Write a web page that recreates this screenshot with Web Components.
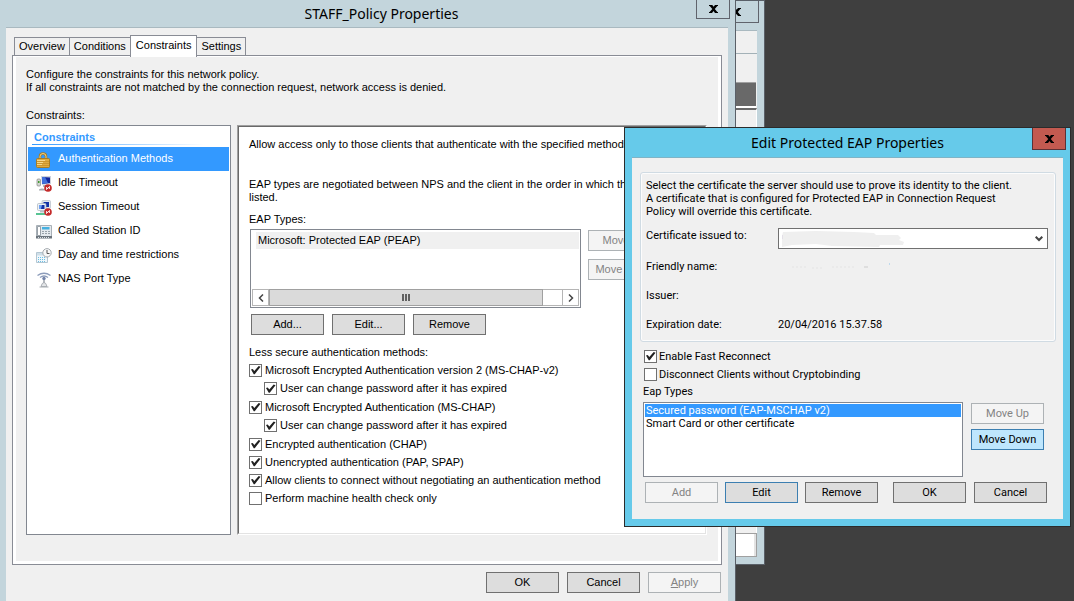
<!DOCTYPE html>
<html lang="en">
<head>
<meta charset="utf-8">
<title>Network Policy Server</title>
<style>
html, body { height: 100%; margin: 0; }
body { background: #3f3f3f; color: #000; font: 11px/13px "Liberation Sans", Arial, sans-serif; overflow: hidden; }
</style>
</head>
<body>
<nps-desktop></nps-desktop>
<script>
const define = (name, html, init) => {
  const template = document.createElement('template');
  template.innerHTML = html;
  customElements.define(name, class extends HTMLElement {
    constructor() {
      super();
      this.attachShadow({ mode: 'open' }).append(template.content.cloneNode(true));
    }
    connectedCallback() {
      if (init && !this.ready) { this.ready = true; init(this, this.shadowRoot); }
    }
  });
};

/* Window frame: title bar, close button, client area */
define('win-frame', `
<style>
:host { display: flex; flex-direction: column; box-sizing: border-box; position: relative; background: #c3d5dc; border: 0 solid #5a6068; border-right-width: 1px; padding: 0 7px 0 6px; }
:host([tone="active"]) { background: #66caea; border: 1px solid #2b2b2b; padding: 0 7px 7px; }
:host([tone="back"]) { border-width: 1px; padding: 0 7px 7px 6px; }
header { height: 27px; padding-left: 29px; display: flex; align-items: center; justify-content: center; }
:host([tone="active"]) header { height: 29px; padding: 0; }
:host([tone="back"]) header { height: 29px; }
h1 { margin: 0; font: 14px/20px "Noto Sans", "Open Sans", sans-serif; white-space: nowrap; }
button { position: absolute; top: 0; right: 5px; width: 34px; height: 19px; box-sizing: border-box; padding: 0; border: 1px solid #60636c; border-top: 0; background: none; display: flex; align-items: center; justify-content: center; }
:host([tone="active"]) button { right: 4px; height: 22px; background: #c35a50; border-color: #5c3236; }
:host([tone="back"]) button { height: 22px; width: 45px; }
main { flex: 1; display: flex; flex-direction: column; background: #f0f0f0; border-top: 1px solid #a9b9c0; }
:host([tone="active"]) main { border-color: #7fb4c6; }
</style>
<header><h1></h1><button type="button" aria-label="Close"><svg width="9" height="8" viewBox="0 0 9 8"><path d="M0 0H3.300L4.600 1.800 6 0H9V1H8.300L5.800 4 8.300 7H9V8H6L4.500 6.100 3 8H0V7H.7L3.300 4 .7 1H0Z" fill="#000"/></svg></button></header>
<main><slot></slot></main>`, (el, root) => {
  root.querySelector('h1').textContent = el.getAttribute('heading') || '';
  if (!el.getAttribute('heading')) root.querySelector('h1').remove();
});

define('push-button', `
<style>
:host { display: block; width: 73px; height: 21px; }
button { box-sizing: border-box; width: 100%; height: 100%; padding: 0; font: inherit; color: #000; background: #ddd; border: 1px solid #707070; white-space: nowrap; }
button:disabled { color: #838383; background: #f4f4f4; border-color: #adb2b5; }
:host([look="default"]) button { border-color: #3c7fb1; }
:host([look="hot"]) button { background: #bee6fd; border-color: #3c7fb1; }
</style>
<button type="button"><slot></slot></button>`, (el, root) => {
  root.querySelector('button').disabled = el.hasAttribute('disabled');
});

define('check-row', `
<style>
:host { display: flex; height: 18px; }
:host([nested]) { height: 19px; padding-left: 15px; }
label { display: flex; align-items: center; gap: 3px; white-space: nowrap; }
input { appearance: none; box-sizing: border-box; flex: none; width: 13px; height: 13px; margin: 0; border: 1px solid #707070; background: #fff; }
input:checked::before { content: ""; display: block; width: 11px; height: 11px; background: #212121; clip-path: polygon(9% 46%, 25% 41%, 39% 60%, 79% 14%, 96% 20%, 43% 88%, 34% 88%); }
:host([tight]) label { gap: 2px; }
</style>
<label><input type="checkbox"><span><slot></slot></span></label>`, (el, root) => {
  root.querySelector('input').checked = el.hasAttribute('checked');
});

define('tab-strip', `
<style>
:host { display: block; }
div { display: flex; align-items: flex-end; height: 20px; padding-left: 2px; }
button { box-sizing: border-box; height: 18px; padding: 0 4px; margin: 0 0 0 -1px; border: 1px solid #898c95; border-bottom: 0; background: #f0f0f0; color: #000; font: inherit; }
button:first-child { margin-left: 0; }
button[aria-selected="true"] { height: 22px; margin-bottom: -2px; padding: 0 5px 2px; background: #fff; position: relative; z-index: 1; }
</style>
<div role="tablist">
<button type="button" role="tab" aria-selected="false">Overview</button>
<button type="button" role="tab" aria-selected="false">Conditions</button>
<button type="button" role="tab" aria-selected="true">Constraints</button>
<button type="button" role="tab" aria-selected="false">Settings</button>
</div>`);

/* 16px row icons of the constraint list */
const icons = {
  lock: `<path d="M4 8V4.500Q4 1.500 7 1.500T10 4.500V8" fill="none" stroke="#a87c20" stroke-width="2.600"/><path d="M4 8V4.500Q4 1.500 7 1.500T10 4.500V8" fill="none" stroke="#f0d28a" stroke-width="1"/><rect x=".5" y="6.500" width="13" height="9" rx="1" fill="#e0ac42" stroke="#a67c26"/><path d="M1 9.500h12M1 11.500h12M1 13.500h12" stroke="#c48f2c" stroke-width=".8"/><path d="M1 8.500h8M1 10.500h6M1 12.500h5" stroke="#fbe3a0" stroke-width=".8"/>`,
  idle: `<path d="M5 0h10v8l-9 1Z" fill="#ccd2dc"/><path d="M6 1l8 .5V7L6 8Z" fill="#10249c"/><path d="M6 1h3l3 6-6 1Z" fill="#3f6fdc"/><rect x="1" y="3" width="3.500" height="7" rx="1" fill="#d4d7d2" stroke="#858585" stroke-width=".7"/><path d="M2 5h1.500v2H2z" fill="#3f9a2f"/><path d="M7 9h4v2H7z" fill="#b2b8c0"/><path d="M3 13.500q3-2 6 0v1H3Z" fill="#a5a9b0"/><circle cx="12" cy="12" r="3.800" fill="#c42a2a"/><path d="m10.200 13.800 3.600-3.600M10.600 11v2M13.400 11v2" stroke="#fff" stroke-width=".9"/>`,
  session: `<rect x="6" y=".5" width="8.500" height="8" rx="1" fill="#e1e6ec" stroke="#b5bec8" stroke-width=".7"/><rect x="7.500" y="2" width="5.500" height="5" fill="#1433a8"/><rect x="1.500" y="3.500" width="8.500" height="7" rx="1" fill="#eef1f4" stroke="#a7b1bb" stroke-width=".7"/><rect x="3" y="5" width="5.500" height="4" fill="#1433a8"/><path d="M3 5h3l-1 4H3Z" fill="#6fa0f2"/><path d="M4 11h5v1.500H4z" fill="#b8c0c6"/><path d="M0 14h9" stroke="#58c493" stroke-width="2"/><circle cx="12" cy="12" r="3.800" fill="#c42a2a"/><path d="m10.200 13.800 3.600-3.600M10.600 11v2M13.400 11v2" stroke="#fff" stroke-width=".9"/>`,
  phone: `<path d="M.5 1.500h15v11H.5Z" fill="#e4e9ed" stroke="#a8b0b7"/><path d="M1.500 2.500h3v9h-3Z" fill="#fff" stroke="#848d95" stroke-width=".8"/><rect x="6" y="3" width="7.500" height="2.500" fill="#45b0e0"/><path d="M6 7.500h8M6 9.500h8" stroke="#98a2aa"/><path d="M8.500 7v4M11.500 7v4" stroke="#e8ecef"/><path d="M0 12h16v2.500H0Z" fill="#6b747c"/><path d="M2 13.500h12" stroke="#dde2e6" stroke-dasharray="1 1"/>`,
  clock: `<path d="M.5 4.500h11v10H.5Z" fill="#f1f7fb" stroke="#b4c6d2"/><path d="M1 5h10v2.500H1Z" fill="#cfdfe9"/><path d="M2 9.500h8M2 11.500h8M2 13.500h8" stroke="#6cc0e4" stroke-dasharray="1 1"/><circle cx="11" cy="4.800" r="4.200" fill="#f8f8f8" stroke="#a3a9ae"/><path d="M11 2v3.500h2.500" fill="none" stroke="#555"/>`,
  port: `<path d="M1.500 3.500Q8-1 14.500 3.500M4 5.500Q8 2.500 12 5.500" fill="none" stroke="#8c9cba" stroke-width="1.300"/><circle cx="8" cy="6.500" r="1.700" fill="#7283a8"/><path d="M7 8h2v4H7z" fill="#b3b8be"/><path d="M5 14.500q1-4 3-4t3 4Z" fill="#e4e6e8" stroke="#9aa0a6" stroke-width=".8"/><path d="M3.500 15h9" stroke="#a8adb2"/>`
};
define('constraint-item', `
<style>
:host { display: flex; align-items: center; height: 24px; padding-left: 8px; gap: 6px; white-space: nowrap; }
:host([selected]) { background: #3399ff; color: #fff; }
svg { flex: none; display: block; margin-top: 1px; }
span { padding-bottom: 2px; }
</style>
<svg width="16" height="16" viewBox="0 0 16 16" aria-hidden="true"></svg><span><slot></slot></span>`, (el, root) => {
  root.querySelector('svg').innerHTML = icons[el.getAttribute('icon')];
});

define('constraint-list', `
<style>
:host { display: block; box-sizing: border-box; background: #fff; border: 1px solid #828790; padding: 1px; }
h2 { margin: 0; padding: 4px 0 0 6px; font-size: 11px; line-height: 13px; color: #3399ff; }
hr { height: 1px; margin: 0 24px 2px 4px; border: 0; background: linear-gradient(90deg, #3399ff, #fff); }
</style>
<h2>Constraints</h2><hr>
<div role="listbox" aria-label="Constraints">
<constraint-item role="option" icon="lock" selected>Authentication Methods</constraint-item>
<constraint-item role="option" icon="idle">Idle Timeout</constraint-item>
<constraint-item role="option" icon="session">Session Timeout</constraint-item>
<constraint-item role="option" icon="phone">Called Station ID</constraint-item>
<constraint-item role="option" icon="clock">Day and time restrictions</constraint-item>
<constraint-item role="option" icon="port">NAS Port Type</constraint-item>
</div>`);

define('eap-list', `
<style>
:host { display: flex; flex-direction: column; justify-content: space-between; box-sizing: border-box; height: 79px; background: #fff; border: 1px solid #828790; padding: 2px 1px 1px; }
ul { list-style: none; margin: 0; padding: 0 0 0 4px; }
li { height: 17px; line-height: 16px; padding-left: 2px; background: #f0f0f0; }
.bar { display: grid; grid-template-columns: 17px 274px 1fr 17px; height: 17px; }
.bar > * { box-sizing: border-box; padding: 0; display: flex; align-items: center; justify-content: center; }
button { background: #fff; border: 1px solid #b5b5b5; }
.thumb { background: #dadada; border: 1px solid #a0a0a0; }
.rail { border: solid #b5b5b5; border-width: 1px 0; }
</style>
<ul><li>Microsoft: Protected EAP (PEAP)</li></ul>
<div class="bar">
<button type="button" aria-label="Scroll left"><svg width="6" height="8"><path d="M5 .5 1.500 4 5 7.500" fill="none" stroke="#444" stroke-width="1.500"/></svg></button>
<div class="thumb"><svg width="8" height="7"><path d="M1 0v7M4 0v7M7 0v7" stroke="#606060" stroke-width="2"/></svg></div>
<div class="rail"></div>
<button type="button" aria-label="Scroll right"><svg width="6" height="8"><path d="M1 .5 4.500 4 1 7.500" fill="none" stroke="#444" stroke-width="1.500"/></svg></button>
</div>`);

define('auth-pane', `
<style>
:host { display: block; box-sizing: border-box; background: #fff; border: 1px solid; border-color: #a0a0a0 #fff #fff #a0a0a0; }
section { height: 100%; box-sizing: border-box; border: 1px solid; border-color: #696969 #e3e3e3 #e3e3e3 #696969; padding: 11px 44px 26px 10px; }
p { margin: 0; white-space: nowrap; }
.order { margin: 27px 0 9px; }
.types { display: grid; grid-template-columns: 1fr 73px; gap: 7px; margin: 3px 0 6px 1px; }
.side { display: grid; gap: 8px; align-content: start; padding-top: 1px; }
.row { display: flex; gap: 8px; margin: 0 0 11px 2px; }
.checks { padding-top: 2px; }
</style>
<section>
<p>Allow access only to those clients that authenticate with the specified methods.</p>
<p class="order">EAP types are negotiated between NPS and the client in the order in which they<br>listed.</p>
<p>EAP Types:</p>
<div class="types"><eap-list></eap-list><div class="side"><push-button disabled>Move Up</push-button><push-button disabled>Move Down</push-button></div></div>
<div class="row"><push-button>Add...</push-button><push-button>Edit...</push-button><push-button>Remove</push-button></div>
<p>Less secure authentication methods:</p>
<div class="checks">
<check-row checked>Microsoft Encrypted Authentication version 2 (MS-CHAP-v2)</check-row>
<check-row nested checked>User can change password after it has expired</check-row>
<check-row checked>Microsoft Encrypted Authentication (MS-CHAP)</check-row>
<check-row nested checked>User can change password after it has expired</check-row>
<check-row checked>Encrypted authentication (CHAP)</check-row>
<check-row checked>Unencrypted authentication (PAP, SPAP)</check-row>
<check-row checked>Allow clients to connect without negotiating an authentication method</check-row>
<check-row>Perform machine health check only</check-row>
</div>
</section>`);

define('policy-properties', `
<style>
:host { display: block; padding: 7px 6px 8px; }
.page { background: #fff; border: 1px solid #898c95; padding: 1px 3px 3px; }
.body { background: #f0f0f0; padding: 11px 11px 26px 10px; }
p { margin: 0 0 15px; }
.label { margin-bottom: 3px; }
.columns { display: grid; grid-template-columns: 205px 1fr; gap: 6px; }
footer { display: flex; justify-content: flex-end; gap: 8px; padding: 7px 1px 0 0; }
</style>
<tab-strip></tab-strip>
<div class="page"><div class="body">
<p>Configure the constraints for this network policy.<br>If all constraints are not matched by the connection request, network access is denied.</p>
<p class="label">Constraints:</p>
<div class="columns"><constraint-list></constraint-list><auth-pane></auth-pane></div>
</div></div>
<footer><push-button>OK</push-button><push-button>Cancel</push-button><push-button disabled><u>A</u>pply</push-button></footer>`);

define('certificate-fields', `
<style>
:host { display: block; border: 1px solid #d0dbe3; border-radius: 3px; box-shadow: inset 0 0 0 1px #fcfcfc; padding: 6px 7px 10px 5px; }
p { margin: 0 0 10px; white-space: nowrap; }
dl { display: grid; grid-template-columns: 132px 1fr; row-gap: 16px; margin: 0; }
dt, dd { margin: 0; height: 13px; }
.cert { display: grid; grid-template-columns: 132px 1fr; margin-bottom: 11px; }
label { padding-top: 1px; }
.combo { position: relative; height: 21px; }
select { appearance: none; box-sizing: border-box; width: 100%; height: 100%; border: 1px solid #707070; border-radius: 0; background: #fff; font: inherit; }
svg { display: block; }
.combo svg { position: absolute; pointer-events: none; }
.smudge { left: 4px; top: 1px; }
.arrow { right: 5px; top: 8px; }
</style>
<p>Select the certificate the server should use to prove its identity to the client.<br>A certificate that is configured for Protected EAP in Connection Request<br>Policy will override this certificate.</p>
<div class="cert"><label for="issued">Certificate issued to:</label>
<div class="combo"><select id="issued"><option></option></select>
<svg class="smudge" width="124" height="19"><path d="M1 3 34 2 72 3 92 4 94 6 116 6 119 9 117 11 122 13 121 16 98 16 97 18 50 17 34 15 10 16 0 18V7Z" fill="#efefef"/><path d="M0 6v4" stroke="#d8cfe0"/></svg>
<svg class="arrow" width="8" height="6"><path d="M.7 .7 4 4 7.300 .7" fill="none" stroke="#444" stroke-width="2"/></svg></div></div>
<dl>
<dt>Friendly name:</dt><dd><svg width="120" height="13"><path d="M14 7h16M34 8h10M54 7h22" stroke="#e4e4e4" stroke-dasharray="2 2"/><path d="M86 7h4" stroke="#ccc"/><path d="M111 4h1" stroke="#8ec3ea"/></svg></dd>
<dt>Issuer:</dt><dd></dd>
<dt>Expiration date:</dt><dd>20/04/2016 15.37.58</dd>
</dl>`);

define('eap-dialog', `
<style>
:host { display: block; padding: 14px 7px 16px 8px; font-family: Roboto, "Noto Sans", sans-serif; }
.opts { padding: 5px 0 2px 4px; }
.label { margin: 0 0 4px 3px; }
.types { display: grid; grid-template-columns: 1fr 73px; gap: 8px; margin: 0 12px 5px 3px; }
ul { list-style: none; box-sizing: border-box; margin: 0; height: 75px; padding: 1px; background: #fff; border: 1px solid #828790; }
li { padding-left: 1px; }
li[aria-selected="true"] { background: #3399ff; color: #fff; }
.side { display: grid; gap: 5px; align-content: start; padding-top: 1px; }
footer { display: flex; justify-content: space-between; padding: 0 9px 0 5px; }
footer div { display: flex; gap: 7px; }
footer div:last-child { gap: 8px; }
</style>
<certificate-fields></certificate-fields>
<div class="opts"><check-row tight checked>Enable Fast Reconnect</check-row><check-row tight>Disconnect Clients without Cryptobinding</check-row></div>
<div class="label" id="types">Eap Types</div>
<div class="types">
<ul role="listbox" aria-labelledby="types"><li role="option" aria-selected="true">Secured password (EAP-MSCHAP v2)</li><li role="option" aria-selected="false">Smart Card or other certificate</li></ul>
<div class="side"><push-button disabled>Move Up</push-button><push-button look="hot">Move Down</push-button></div>
</div>
<footer><div><push-button disabled>Add</push-button><push-button look="default">Edit</push-button><push-button>Remove</push-button></div>
<div><push-button>OK</push-button><push-button>Cancel</push-button></div></footer>`);

/* The console window whose right edge shows behind the policy sheet */
define('console-pane', `
<style>
:host { flex: 1; display: grid; grid-template-rows: 22px 29px 26px 1fr 24px; }
.tools { border-top: 1px solid #a3b1b7; }
.head { background: #696969; border-top: 1px solid #a0a0a0; border-bottom: 2px solid #fff; margin-right: 1px; }
.view { border-top: 2px solid #696969; border-right: 1px solid #fff; }
.status { background: #fff; border: 1px solid #a0a0a0; box-shadow: inset -2px 0 #e3e3e3; }
</style>
<div></div><div class="tools"></div><div class="head"></div><div class="view"></div><div class="status"></div>`);

define('nps-desktop', `
<style>
:host { display: block; position: relative; min-height: 100%; }
win-frame { position: absolute; }
.console { left: 0; right: 309px; top: 0; height: 565px; }
.policy { left: 0; right: 338px; top: 0; min-height: 100%; }
.eap { left: 624px; right: 3px; top: 127px; }
</style>
<win-frame class="console" tone="back"><console-pane></console-pane></win-frame>
<win-frame class="policy" heading="STAFF_Policy Properties"><policy-properties></policy-properties></win-frame>
<win-frame class="eap" tone="active" heading="Edit Protected EAP Properties"><eap-dialog></eap-dialog></win-frame>`);
</script>
</body>
</html>
